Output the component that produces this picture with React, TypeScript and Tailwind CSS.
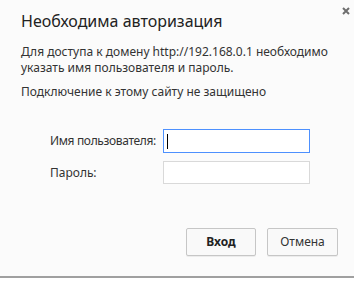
export default function App() {
  return (
    <div className="w-[354px] h-[281px] bg-white overflow-hidden" style={{ fontFamily: '"Noto Sans", "Open Sans", sans-serif' }}>
      <div className="relative w-[354px] h-[278px] bg-[#fbfbfb] border-b-2 border-[#a0a0a0] text-[#333]">
        <svg className="absolute left-[342px] top-[7px]" width="8" height="8" viewBox="0 0 8 8">
          <path d="M1 1 L7 7 M7 1 L1 7" stroke="#6e6e6e" strokeWidth="2" />
        </svg>
        <div className="pl-[21px] pt-[10px] text-[16px] leading-[22px] text-[#222]">Необходима авторизация</div>
        <div className="pl-[21px] pt-[12px] text-[12px] leading-[16px] text-[#333]">
          <div>Для доступа к домену http://192.168.0.1 необходимо</div>
          <div>указать имя пользователя и пароль.</div>
          <div className="pt-[8px]">Подключение к этому сайту не защищено</div>
        </div>
        <div className="pl-[50px] pt-[29px] grid grid-cols-[113px_147px] gap-y-[8px] text-[12px] text-[#333] items-center">
          <div className="tracking-[-0.35px]">Имя пользователя:</div>
          <div className="h-[24px] bg-white border border-[#4d90fe] flex items-center pl-[3px]">
            <div className="w-[1px] h-[15px] bg-black" />
          </div>
          <div>Пароль:</div>
          <div className="h-[23px] bg-white border border-[#d9d9d9]" />
        </div>
        <div className="flex justify-end gap-[11px] pr-[16px] pt-[44px]">
          <button className="w-[70px] h-[28px] bg-[#f9f9f9] border border-[#c6c6c6] rounded-[2px] shadow-[0_1px_0_rgba(0,0,0,0.06)] text-[12px] font-bold text-[#222]">Вход</button>
          <button className="w-[71px] h-[28px] bg-[#f9f9f9] border border-[#c6c6c6] rounded-[2px] shadow-[0_1px_0_rgba(0,0,0,0.06)] text-[12px] text-[#333]">Отмена</button>
        </div>
      </div>
    </div>
  );
}
